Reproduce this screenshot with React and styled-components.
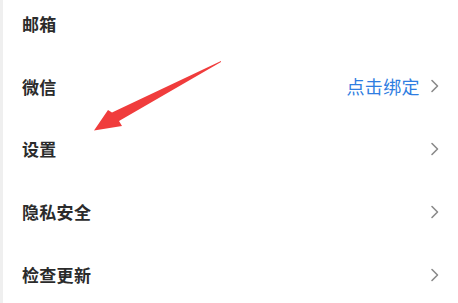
import React from "react";
import styled, { createGlobalStyle } from "styled-components";

const Global = createGlobalStyle`
  html, body { margin: 0; padding: 0; background: #fff; }
  body { font-family: "Noto Sans CJK SC", "Noto Sans", sans-serif; }
`;

const Page = styled.div`
  position: relative;
  width: 458px;
  height: 303px;
  overflow: hidden;
  background: #fff;
  border-left: 3px solid #efefef;
  box-sizing: border-box;
`;

const List = styled.div`
  display: flex;
  flex-direction: column;
  margin-top: -8px;
`;

const Row = styled.div`
  display: flex;
  align-items: center;
  justify-content: space-between;
  height: 62.8px;
  padding: 0 18px 0 19px;
`;

const Label = styled.span`
  font-size: 17px;
  font-weight: 700;
  color: #2b2b2b;
  letter-spacing: 0.3px;
`;

const Right = styled.div`
  display: flex;
  align-items: center;
  gap: 10px;
`;

const Value = styled.span`
  font-size: 18px;
  color: #2f7de1;
  letter-spacing: 0.4px;
`;

const Chevron = () => (
  <svg width="10" height="14" viewBox="0 0 10 14">
    <path d="M2 1.5 L7.5 7 L2 12.5" fill="none" stroke="#8a8a8a" strokeWidth="1.6" strokeLinecap="round" strokeLinejoin="round" />
  </svg>
);

const Arrow = styled.svg`
  position: absolute;
  left: 0;
  top: 0;
  pointer-events: none;
`;

const items = [
  { label: "邮箱" },
  { label: "微信", value: "点击绑定", chevron: true },
  { label: "设置", chevron: true },
  { label: "隐私安全", chevron: true },
  { label: "检查更新", chevron: true },
];

export default function App() {
  return (
    <>
      <Global />
      <Page>
        <List>
          {items.map((it) => (
            <Row key={it.label}>
              <Label>{it.label}</Label>
              <Right>
                {it.value && <Value>{it.value}</Value>}
                {it.chevron && <Chevron />}
              </Right>
            </Row>
          ))}
        </List>
        <Arrow width="458" height="303" viewBox="0 0 458 303">
          <path
            d="M218 61 L109 112.5 L105 110 L91 130.5 L119 126 L116 121 L218 62 Z"
            fill="#f03c3c"
          />
        </Arrow>
      </Page>
    </>
  );
}
